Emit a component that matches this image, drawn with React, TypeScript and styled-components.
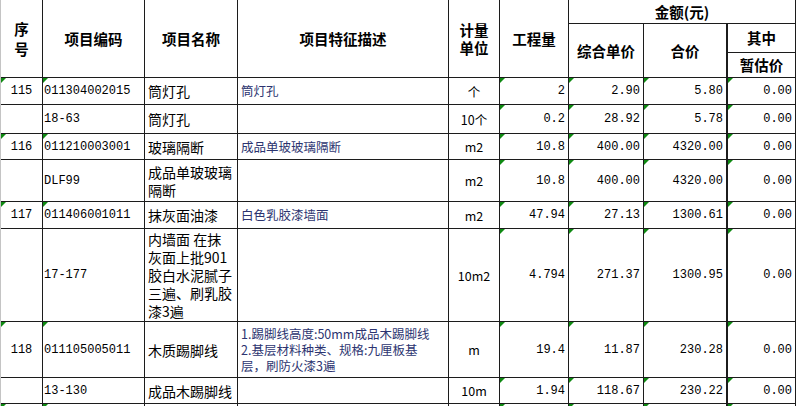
import React from 'react';
import styled, { createGlobalStyle, css } from 'styled-components';

const Global = createGlobalStyle`
  html, body { margin: 0; padding: 0; background: #fff; overflow: hidden; }
  body { width: 797px; height: 406px; }
`;

const COLS = '42px 102px 93px 211px 51px 69px 75px 84px 68px 1fr';
const LINE = '#1c1c1c';
const CJK = '"Noto Sans CJK SC", "Noto Sans", sans-serif';
const MONO = '"Liberation Mono", "Noto Sans CJK SC", monospace';

const Sheet = styled.div`
  width: 797px;
  height: 406px;
  overflow: hidden;
  box-sizing: border-box;
  border-left: 1px solid #c4c4c4;
  font-family: ${CJK};
  color: #000;
  background: #fff;
`;

const HeaderGrid = styled.div`
  display: grid;
  grid-template-columns: ${COLS};
  grid-template-rows: 24px 29px 25px;
`;

const HeadCell = styled.div<{ $c: string; $r: string; $thick?: boolean; $blank?: boolean; $lh?: number }>`
  grid-column: ${p => p.$c};
  grid-row: ${p => p.$r};
  box-sizing: border-box;
  border-right: ${p => (p.$blank ? 'none' : `${p.$thick ? 2 : 1}px solid ${LINE}`)};
  border-bottom: ${p => (p.$blank ? 'none' : `1px solid ${LINE}`)};
  display: flex;
  align-items: center;
  justify-content: center;
  text-align: center;
  font-weight: 700;
  font-size: 14.5px;
  line-height: ${p => p.$lh ?? 18}px;
  white-space: pre-line;
`;

const Row = styled.div<{ $h: number; $thick?: boolean }>`
  display: grid;
  grid-template-columns: ${COLS};
  height: ${p => p.$h}px;
  & > * {
    border-bottom-width: ${p => (p.$thick ? 2 : 1)}px;
  }
`;

const Cell = styled.div<{ $flag?: boolean; $thick?: boolean }>`
  position: relative;
  box-sizing: border-box;
  min-width: 0;
  overflow: hidden;
  border-right: ${p => (p.$thick ? 2 : 1)}px solid ${LINE};
  border-bottom: 1px solid ${LINE};
  display: flex;
  align-items: center;
  white-space: nowrap;
  ${p =>
    p.$flag &&
    css`
      &::before {
        content: '';
        position: absolute;
        top: 0;
        left: 0;
        width: 0;
        height: 0;
        border-top: 5px solid #0f8a12;
        border-right: 5px solid transparent;
      }
    `}
`;

const SeqCell = styled(Cell)`
  justify-content: center;
  font-family: ${MONO};
  font-size: 12px;
`;

const CodeCell = styled(Cell)`
  justify-content: flex-start;
  padding-left: 1px;
  font-family: ${MONO};
  font-size: 12px;
`;

const NameCell = styled(Cell)`
  flex-direction: column;
  align-items: flex-start;
  justify-content: center;
  padding-left: 3px;
  font-size: 14px;
  line-height: 18px;
`;

const DescCell = styled(Cell)`
  flex-direction: column;
  align-items: flex-start;
  justify-content: center;
  padding-left: 3px;
  font-size: 12.5px;
  line-height: 16px;
  color: #2c3470;
`;

const UnitCell = styled(Cell)`
  justify-content: center;
  font-size: 12.5px;
`;

const NumCell = styled(Cell)`
  justify-content: flex-end;
  padding-right: 3px;
  font-family: ${MONO};
  font-size: 12px;
`;

const Blank = styled.div`
  background: #fff;
`;

const Line = styled.span`
  display: block;
`;

type Item = {
  h: number;
  thick?: boolean;
  main?: boolean;
  seq?: string;
  code?: string;
  name?: string[];
  desc?: string[];
  unit?: string;
  qty?: string;
  price?: string;
  total?: string;
  est?: string;
};

const rows: Item[] = [
  { h: 27, main: true, seq: '115', code: '011304002015', name: ['筒灯孔'], desc: ['筒灯孔'], unit: '个', qty: '2', price: '2.90', total: '5.80', est: '0.00' },
  { h: 29, code: '18-63', name: ['筒灯孔'], unit: '10个', qty: '0.2', price: '28.92', total: '5.78', est: '0.00' },
  { h: 26, main: true, seq: '116', code: '011210003001', name: ['玻璃隔断'], desc: ['成品单玻玻璃隔断'], unit: 'm2', qty: '10.8', price: '400.00', total: '4320.00', est: '0.00' },
  { h: 42, thick: true, code: 'DLF99', name: ['成品单玻玻璃', '隔断'], unit: 'm2', qty: '10.8', price: '400.00', total: '4320.00', est: '0.00' },
  { h: 27, main: true, seq: '117', code: '011406001011', name: ['抹灰面油漆'], desc: ['白色乳胶漆墙面'], unit: 'm2', qty: '47.94', price: '27.13', total: '1300.61', est: '0.00' },
  { h: 93, code: '17-177', name: ['内墙面 在抹', '灰面上批901', '胶白水泥腻子', '三遍、刷乳胶', '漆3遍'], unit: '10m2', qty: '4.794', price: '271.37', total: '1300.95', est: '0.00' },
  { h: 56, main: true, seq: '118', code: '011105005011', name: ['木质踢脚线'], desc: ['1.踢脚线高度:50mm成品木踢脚线', '2.基层材料种类、规格:九厘板基', '层，刷防火漆3遍'], unit: 'm', qty: '19.4', price: '11.87', total: '230.28', est: '0.00' },
  { h: 26, code: '13-130', name: ['成品木踢脚线'], unit: '10m', qty: '1.94', price: '118.67', total: '230.22', est: '0.00' },
  { h: 27, main: true },
];

export default function App() {
  return (
    <>
      <Global />
      <Sheet>
        <HeaderGrid>
          <HeadCell $c="1" $r="1 / 4" $lh={20}>{'序\n号'}</HeadCell>
          <HeadCell $c="2" $r="1 / 4">项目编码</HeadCell>
          <HeadCell $c="3" $r="1 / 4">项目名称</HeadCell>
          <HeadCell $c="4" $r="1 / 4">项目特征描述</HeadCell>
          <HeadCell $c="5" $r="1 / 4">{'计量\n单位'}</HeadCell>
          <HeadCell $c="6" $r="1 / 4">工程量</HeadCell>
          <HeadCell $c="7 / 10" $r="1">金额(元)</HeadCell>
          <HeadCell $c="7" $r="2 / 4">综合单价</HeadCell>
          <HeadCell $c="8" $r="2 / 4" $thick>合价</HeadCell>
          <HeadCell $c="9" $r="2">其中</HeadCell>
          <HeadCell $c="9" $r="3">暂估价</HeadCell>
          <HeadCell $c="10" $r="1 / 4" $blank />
        </HeaderGrid>
        {rows.map((r, i) => (
          <Row key={i} $h={r.h} $thick={r.thick}>
            <SeqCell $flag={r.main}>{r.seq}</SeqCell>
            <CodeCell $flag={r.main}>{r.code}</CodeCell>
            <NameCell>
              {(r.name ?? []).map((t, j) => (
                <Line key={j}>{t}</Line>
              ))}
            </NameCell>
            <DescCell>
              {(r.desc ?? []).map((t, j) => (
                <Line key={j}>{t}</Line>
              ))}
            </DescCell>
            <UnitCell>{r.unit}</UnitCell>
            <NumCell $flag>{r.qty}</NumCell>
            <NumCell $flag>{r.price}</NumCell>
            <NumCell $flag $thick>{r.total}</NumCell>
            <NumCell $flag>{r.est}</NumCell>
            <Blank />
          </Row>
        ))}
      </Sheet>
    </>
  );
}
